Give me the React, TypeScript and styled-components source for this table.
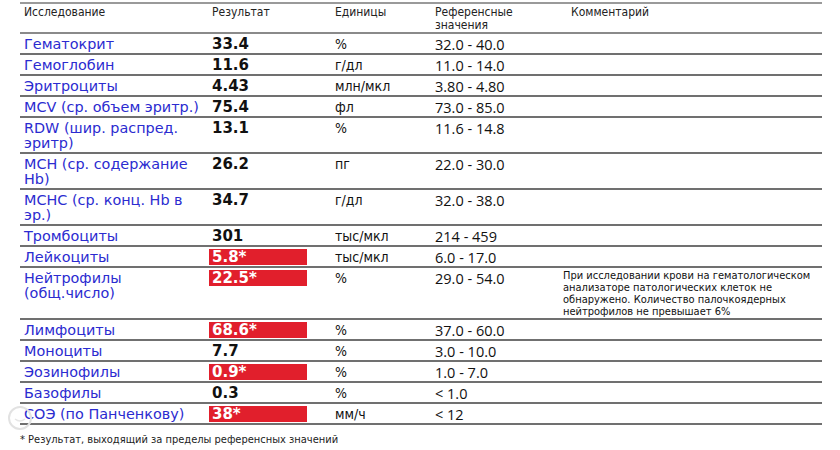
import React from "react";
import styled, { createGlobalStyle } from "styled-components";

const Global = createGlobalStyle`
  html, body { margin: 0; padding: 0; background: #fff; }
  body { width: 840px; height: 450px; overflow: hidden; }
`;

const Page = styled.div`
  position: relative;
  padding: 2px 18px 0 20px;
  font-family: "DejaVu Sans", Verdana, sans-serif;
`;

const Table = styled.div`
  border-top: 2px solid #9a9a9a;
`;

const COLS = "185px 125px 100px 128px 1fr";

const HeadRow = styled.div`
  display: grid;
  grid-template-columns: ${COLS};
  border-bottom: 2px solid #8a8a8a;
  box-sizing: border-box;
  height: 30px;
`;

const HeadCell = styled.div<{ $indent?: number }>`
  font-family: "DejaVu Sans Condensed", Tahoma, sans-serif;
  font-size: 12px;
  line-height: 13px;
  color: #222;
  padding: 2px 0 0 ${(p) => p.$indent ?? 4}px;
`;

const Row = styled.div`
  display: grid;
  grid-template-columns: ${COLS};
  border-bottom: 2px solid #707070;
`;

const Name = styled.div`
  color: #2b2bd0;
  font-size: 14.4px;
  line-height: 15px;
  padding: 3px 2px 1px 4px;
`;

const Value = styled.div`
  padding: 2px 0 0 7px;
  font-size: 15px;
  line-height: 16px;
  font-weight: bold;
  color: #111;
`;

const Flag = styled.span`
  display: block;
  width: 98px;
  height: 16px;
  margin-left: -3px;
  padding-left: 3px;
  box-sizing: border-box;
  background: #e11f2c;
  color: #fff;
`;

const Unit = styled.div`
  font-family: "DejaVu Sans Condensed", Tahoma, sans-serif;
  font-size: 14px;
  line-height: 15px;
  color: #111;
  padding: 3px 0 0 5px;
`;

const Ref = styled.div`
  font-family: "Open Sans", "Segoe UI", sans-serif;
  font-size: 14.5px;
  line-height: 15px;
  color: #111;
  padding: 3px 0 0 5px;
`;

const Comment = styled.div`
  font-family: "DejaVu Sans Condensed", Tahoma, sans-serif;
  font-size: 11px;
  line-height: 12px;
  color: #111;
  padding: 2px 0 0 5px;
`;

const Footnote = styled.div`
  font-family: "DejaVu Sans Condensed", Tahoma, sans-serif;
  font-size: 11px;
  color: #222;
  padding: 8px 0 0 0;
`;

const Mark = styled.svg`
  position: absolute;
  left: 6px;
  top: 404px;
`;

type Item = {
  name: string;
  value: string;
  flag?: boolean;
  unit: string;
  ref: string;
  comment?: string;
};

const items: Item[] = [
  { name: "Гематокрит", value: "33.4", unit: "%", ref: "32.0 - 40.0" },
  { name: "Гемоглобин", value: "11.6", unit: "г/дл", ref: "11.0 - 14.0" },
  { name: "Эритроциты", value: "4.43", unit: "млн/мкл", ref: "3.80 - 4.80" },
  { name: "MCV (ср. объем эритр.)", value: "75.4", unit: "фл", ref: "73.0 - 85.0" },
  { name: "RDW (шир. распред. эритр)", value: "13.1", unit: "%", ref: "11.6 - 14.8" },
  { name: "MCH (ср. содержание Hb)", value: "26.2", unit: "пг", ref: "22.0 - 30.0" },
  { name: "MCHC (ср. конц. Hb в эр.)", value: "34.7", unit: "г/дл", ref: "32.0 - 38.0" },
  { name: "Тромбоциты", value: "301", unit: "тыс/мкл", ref: "214 - 459" },
  { name: "Лейкоциты", value: "5.8*", flag: true, unit: "тыс/мкл", ref: "6.0 - 17.0" },
  {
    name: "Нейтрофилы (общ.число)",
    value: "22.5*",
    flag: true,
    unit: "%",
    ref: "29.0 - 54.0",
    comment:
      "При исследовании крови на гематологическом анализаторе патологических клеток не обнаружено. Количество палочкоядерных нейтрофилов не превышает 6%",
  },
  { name: "Лимфоциты", value: "68.6*", flag: true, unit: "%", ref: "37.0 - 60.0" },
  { name: "Моноциты", value: "7.7", unit: "%", ref: "3.0 - 10.0" },
  { name: "Эозинофилы", value: "0.9*", flag: true, unit: "%", ref: "1.0 - 7.0" },
  { name: "Базофилы", value: "0.3", unit: "%", ref: "< 1.0" },
  { name: "СОЭ (по Панченкову)", value: "38*", flag: true, unit: "мм/ч", ref: "< 12" },
];

export default function App() {
  return (
    <>
      <Global />
      <Page>
        <Table>
          <HeadRow>
            <HeadCell>Исследование</HeadCell>
            <HeadCell $indent={7}>Результат</HeadCell>
            <HeadCell $indent={5}>Единицы</HeadCell>
            <HeadCell $indent={5}>
              Референсные
              <br />
              значения
            </HeadCell>
            <HeadCell $indent={13}>Комментарий</HeadCell>
          </HeadRow>
          {items.map((it) => (
            <Row key={it.name}>
              <Name>{it.name}</Name>
              <Value>{it.flag ? <Flag>{it.value}</Flag> : it.value}</Value>
              <Unit>{it.unit}</Unit>
              <Ref>{it.ref}</Ref>
              {it.comment ? <Comment>{it.comment}</Comment> : <div />}
            </Row>
          ))}
        </Table>
        <Footnote>* Результат, выходящий за пределы референсных значений</Footnote>
        <Mark width="28" height="28" viewBox="0 0 28 28">
          <circle cx="14" cy="14" r="11" fill="none" stroke="#e2e2e2" strokeWidth="2" />
          <path d="M9 15 q5 4 10 0" fill="none" stroke="#e6e6e6" strokeWidth="1.5" />
        </Mark>
      </Page>
    </>
  );
}
